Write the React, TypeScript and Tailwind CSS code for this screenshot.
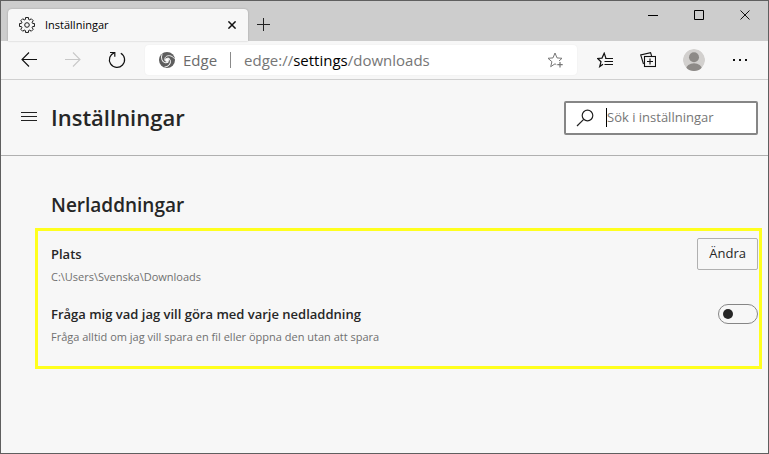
import React, { useState } from 'react'

interface IconProps {
  className?: string
}

// Cog with eight teeth, drawn round the middle of a 16 unit box
const gearPath = (() => {
  const points: string[] = []
  for (let i = 0; i < 8; i++) {
    const mid = (i * Math.PI) / 4
    const corners = [
      [-0.27, 5.8],
      [-0.2, 7.6],
      [0.2, 7.6],
      [0.27, 5.8],
    ]
    corners.forEach(([offset, r]) => {
      const x = 8 + r * Math.sin(mid + offset)
      const y = 8 - r * Math.cos(mid + offset)
      points.push(`${x.toFixed(2)} ${y.toFixed(2)}`)
    })
  }
  return `M${points.join('L')}Z`
})()

const GearIcon = () => (
  <svg className="h-4 w-4 overflow-visible" viewBox="0 0 16 16" fill="none" stroke="#1b1b1b" strokeLinejoin="round">
    <path d={gearPath} />
    <circle cx="8" cy="8" r="2.3" />
  </svg>
)

const BackIcon = () => (
  <svg className="h-4 w-4" viewBox="0 0 16 16" fill="none" stroke="#111" strokeWidth="1.1">
    <path d="M16 7.500H1M8 .5l-7 7 7 7" />
  </svg>
)

const ForwardIcon = () => (
  <svg className="h-4 w-4" viewBox="0 0 16 16" fill="none" stroke="#c8c8c8" strokeWidth="1.1">
    <path d="M0 7.500h15M8 .5l7 7-7 7" />
  </svg>
)

const ReloadIcon = () => (
  <svg className="h-4 w-4 overflow-visible" viewBox="0 0 16 16" fill="none" stroke="#111" strokeWidth="1.2">
    <path d="M11.800 1.200A7.600 7.600 0 1 1 5.500.6" />
    <path d="M1 .5h4.800v4.300" />
  </svg>
)

// One arm of the swirl, repeated every third of a turn
const ARM = 'M5.800 8.600C5.200 5.500 7.600 3.300 10.600 3.700c2 .3 3.600 1.300 4.900 3'

const EdgeIcon = () => (
  <svg className="h-4 w-4" viewBox="0 0 16 16" fill="none" stroke="#fff" strokeWidth=".9">
    <circle cx="8" cy="8" r="8" fill="#5e5e5e" stroke="none" />
    <circle cx="8" cy="8" r="2" fill="#fff" stroke="none" />
    <path d={ARM} />
    <path d={ARM} transform="rotate(120 8 8)" />
    <path d={ARM} transform="rotate(240 8 8)" />
  </svg>
)

const AddFavoriteIcon = () => (
  <svg className="h-4 w-4" viewBox="0 0 16 16" fill="none" stroke="#767676">
    <path d="M9.300 12.600L8 11.800l-4.300 2.900 1.200-5L1 6.300l5-.4L8 1l2 4.900 5 .4-3 2.700" />
    <path d="M13 10v5.500M10.300 12.700h5.400" strokeWidth="1.2" />
  </svg>
)

const FavoritesIcon = () => (
  <svg className="h-4 w-4" viewBox="0 0 16 16" fill="none" stroke="#111" strokeWidth="1.200">
    <path d="M6 12.200l-3.300 2.400 1.300-4.900L.7 6.500l4.300-.4L7.200 1.200l1.700 4.900" />
    <path d="M8.200 6.500H16M7.500 9.500H16M7.500 12.500H16" />
  </svg>
)

const CollectionsIcon = () => (
  <svg className="h-4 w-4" viewBox="0 0 16 16" fill="none" stroke="#111" strokeWidth="1.100">
    <path d="M3.500 12L.7 3 10.600.7l1 3.300" />
    <rect x="4.500" y="4.500" width="11" height="10" />
    <path d="M10 6.500v6M7 9.500h6" />
  </svg>
)

const AvatarIcon = () => (
  <svg className="h-[22px] w-[22px]" viewBox="0 0 22 22">
    <clipPath id="avatar">
      <circle cx="11" cy="11" r="11" />
    </clipPath>
    <g clipPath="url(#avatar)">
      <circle cx="11" cy="11" r="11" fill="#d2d0ce" />
      <circle cx="11" cy="8.300" r="5" fill="#8d8a87" />
      <ellipse cx="11" cy="20.500" rx="8" ry="6.200" fill="#8d8a87" />
    </g>
  </svg>
)

const MoreIcon = () => (
  <svg className="h-4 w-4" viewBox="0 0 16 16" fill="#111">
    <path d="M1 7h2v2H1zM7 7h2v2H7zM13 7h2v2h-2z" />
  </svg>
)

const SearchIcon = () => (
  <svg className="h-[18px] w-[18px] shrink-0" viewBox="0 0 18 18" fill="none" stroke="#222" strokeWidth="1.200">
    <circle cx="11.500" cy="6.500" r="5.300" />
    <path d="M7.700 10.300L1 17" />
  </svg>
)

const CrossIcon = ({ className }: IconProps) => (
  <svg className={className} viewBox="0 0 10 10" fill="none" stroke="#111">
    <path d="M.5.500l9 9M9.500.500l-9 9" vectorEffect="non-scaling-stroke" />
  </svg>
)

function TitleBar() {
  return (
    <div className="flex h-10 items-end bg-[#cdcdcd] pl-[7px]">
      <div className="flex h-8 w-60 items-center rounded-t bg-[#f7f7f7] pr-3 pl-[11px] shadow-[0_0_2px_rgba(0,0,0,0.25)]">
        <GearIcon />
        <span className="ml-[10px] flex-1 text-[11px] text-black">Inställningar</span>
        <button aria-label="Stäng flik">
          <CrossIcon className="h-2 w-2 stroke-[1.5]" />
        </button>
      </div>
      <button aria-label="Ny flik" className="mb-[9px] ml-[9px]">
        <svg className="h-[14px] w-[14px]" viewBox="0 0 14 14" stroke="#222">
          <path d="M6.500 0v13M0 6.500h13" />
        </svg>
      </button>
      <div className="ml-auto flex h-full items-start gap-9 pt-[9px] pr-[18px]">
        <button aria-label="Minimera">
          <svg className="h-[10px] w-[10px]" viewBox="0 0 10 10" stroke="#000">
            <path d="M0 5.500h10" />
          </svg>
        </button>
        <button aria-label="Maximera">
          <svg className="h-[10px] w-[10px]" viewBox="0 0 10 10" fill="none" stroke="#000">
            <path d="M.5.500h9v9h-9z" />
          </svg>
        </button>
        <button aria-label="Stäng">
          <CrossIcon className="h-[10px] w-[10px]" />
        </button>
      </div>
    </div>
  )
}

function Toolbar() {
  return (
    <div className="flex h-[39px] items-center border-b border-[#d0d0d0] px-5">
      <div className="flex items-center gap-7">
        <button aria-label="Tillbaka">
          <BackIcon />
        </button>
        <button aria-label="Framåt" disabled>
          <ForwardIcon />
        </button>
        <button aria-label="Uppdatera">
          <ReloadIcon />
        </button>
      </div>
      <div className="ml-5 flex h-[30px] flex-1 items-center rounded bg-white px-[14px] text-[15px] text-[#6b6b6b] shadow-[0_0_2px_rgba(0,0,0,0.06)]">
        <EdgeIcon />
        <span className="ml-2">Edge</span>
        <span className="mx-[13px] h-4 w-px bg-[#8a8a8a]" />
        <span className="flex-1 text-[#767676]">
          edge://<span className="text-black">settings</span>/downloads
        </span>
        <button aria-label="Lägg till i favoriter">
          <AddFavoriteIcon />
        </button>
      </div>
      <div className="ml-5 flex items-center gap-[27px]">
        <button aria-label="Favoriter">
          <FavoritesIcon />
        </button>
        <button aria-label="Samlingar">
          <CollectionsIcon />
        </button>
        <button aria-label="Profil">
          <AvatarIcon />
        </button>
        <button aria-label="Mer">
          <MoreIcon />
        </button>
      </div>
    </div>
  )
}

export default function App() {
  const [askFirst, setAskFirst] = useState(false)
  const [query, setQuery] = useState('')

  return (
    <div className="min-h-screen border border-[#5f5f5f] bg-[#f7f7f7] font-['Open_Sans',sans-serif] text-[#262626]">
      <TitleBar />
      <Toolbar />

      {/* Page header */}
      <header className="flex h-[76px] items-center border-b border-[#b0b0b0] pr-[10px] pl-5">
        <button aria-label="Meny">
          <svg className="h-4 w-4" viewBox="0 0 16 16" stroke="#222">
            <path d="M0 2.500h16M0 6.500h16M0 10.500h16" />
          </svg>
        </button>
        <h1 className="ml-[14px] flex-1 text-[22px] font-semibold">Inställningar</h1>
        <label className="flex h-[34px] w-[194px] items-center gap-3 rounded-xs border-2 border-[#868686] bg-white px-[10px]">
          <SearchIcon />
          <span className="flex min-w-0 flex-1 items-center">
            <span className="h-[19px] w-px shrink-0 bg-black" />
            <input
              type="text"
              aria-label="Sök i inställningar"
              placeholder="Sök i inställningar"
              value={query}
              onChange={(e) => setQuery(e.target.value)}
              className="w-full min-w-0 text-[13px] outline-none placeholder:text-[#767676]"
            />
          </span>
        </label>
      </header>

      {/* Downloads */}
      <main className="pt-[34px] pr-[6px] pl-[34px]">
        <h2 className="pl-4 text-[19px] leading-[30px] font-semibold">Nerladdningar</h2>
        <div className="mt-2 h-[141px] border-3 border-[#ffff1e] pt-[7px] pr-px pl-[13px]">
          <div className="flex items-start justify-between">
            <div className="pt-[6px]">
              <div className="text-[13px] leading-5 font-semibold">Plats</div>
              <div className="mt-[3px] text-[11px] leading-5 text-[#707070]">C:\Users\Svenska\Downloads</div>
            </div>
            <button className="h-8 rounded-xs border border-[#b0b0b0] px-[11px] text-[13px]">Ändra</button>
          </div>
          <div className="mt-[11px] flex items-start justify-between">
            <div className="pt-[6px]">
              <label htmlFor="ask" className="block text-[13px] leading-5 font-semibold">
                Fråga mig vad jag vill göra med varje nedladdning
              </label>
              <div className="mt-[3px] text-[11px] leading-5 text-[#707070]">
                Fråga alltid om jag vill spara en fil eller öppna den utan att spara
              </div>
            </div>
            <input
              id="ask"
              type="checkbox"
              role="switch"
              checked={askFirst}
              onChange={(e) => setAskFirst(e.target.checked)}
              className="mt-[6px] flex h-5 w-10 appearance-none items-center rounded-full border border-[#868686] px-1 before:h-[10px] before:w-[10px] before:rounded-full before:bg-[#262626] checked:justify-end"
            />
          </div>
        </div>
      </main>
    </div>
  )
}
